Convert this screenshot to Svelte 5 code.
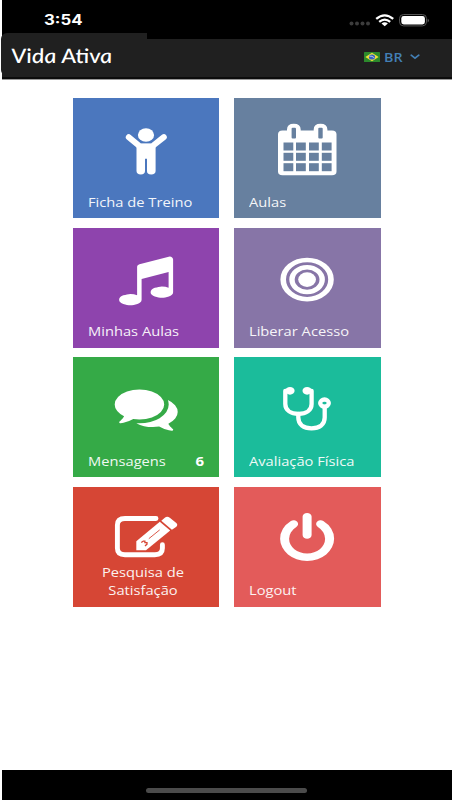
<script>
  const tiles = [
    { icon: 'child', label: 'Ficha de Treino', color: '#4b77be' },
    { icon: 'calendar', label: 'Aulas', color: '#67809f' },
    { icon: 'music', label: 'Minhas Aulas', color: '#8e44ad' },
    { icon: 'target', label: 'Liberar Acesso', color: '#8775a7' },
    { icon: 'comments', label: 'Mensagens', color: '#35aa47', count: 6 },
    { icon: 'stethoscope', label: 'Avaliação Física', color: '#1bbc9b' },
    { icon: 'survey', label: 'Pesquisa de Satisfação', color: '#d64635', centered: true },
    { icon: 'power', label: 'Logout', color: '#e35b5a' }
  ];
  const cellColumns = [49.5, 62, 75, 87.8];
  const cellRows = [44.5, 54.8, 65.2];
</script>

<div class="screen">
  <header class="status">
    <span class="time">3:54</span>
    <svg class="signals" width="84" height="18" viewBox="0 0 84 18">
      <g fill="#3c3c3c">
        <circle cx="5.5" cy="9.6" r="2" /><circle cx="11" cy="9.6" r="2" />
        <circle cx="16.5" cy="9.6" r="2" /><circle cx="22" cy="9.6" r="2" />
      </g>
      <g fill="none" stroke="#fff" stroke-width="2.3">
        <path d="M30.2 4.9Q38.7-2.2 47.2 4.9" />
        <path d="M33.2 7.9Q38.7 3.4 44.2 7.9" />
      </g>
      <path d="M35.5 9.4Q38.7 7 41.9 9.4L38.7 12.2Z" fill="#fff" />
      <rect x="53.5" y="0.5" width="27" height="11.4" rx="4" fill="none" stroke="#555" />
      <rect x="55.3" y="2" width="23.6" height="8.4" rx="2.4" fill="#fff" />
      <path d="M81.7 4.4Q84 6.4 81.7 8.4Z" fill="#666" />
    </svg>
  </header>

  <nav class="bar">
    <div class="brand"><span>Vida Ativa</span></div>
    <div class="lang">
      <svg width="16" height="10" viewBox="0 0 16 10">
        <rect width="16" height="10" rx="0.6" fill="#2c8a2c" />
        <path d="M8 .8 14.6 5 8 9.2 1.4 5Z" fill="#f0e03a" />
        <ellipse cx="8" cy="5" rx="3.1" ry="2.6" fill="#3560bd" />
        <path d="M5.3 4.2Q8 3.6 10.5 5.9" stroke="#cfdcf5" stroke-width=".8" fill="none" />
      </svg>
      <span class="code">BR</span>
      <svg class="caret" width="10" height="6" viewBox="0 0 10 6">
        <path d="M1.2 1.2 5 4.2 8.8 1.2" fill="none" stroke="#437fb5" stroke-width="1.7" stroke-linecap="round" />
      </svg>
    </div>
  </nav>

  <main>
    {#each tiles as tile}
      <section class="tile" style:background={tile.color}>
        <svg class="icon" viewBox="0 0 146 80">
          {#if tile.icon === 'child'}
            <ellipse cx="73" cy="37" rx="8.1" ry="6.8" />
            <path d="M55.8 39.2 67 48.5H79L90.8 39.2" fill="none" stroke="#fff" stroke-width="6" stroke-linecap="round" stroke-linejoin="round" />
            <path d="M63.5 47.5 68 45.8H78L82.6 47.5V73Q82.6 76.4 78.2 76.4T74 73V60.7H72V73Q72 76.4 67.8 76.4T63.5 73Z" />
          {:else if tile.icon === 'calendar'}
            <path d="M48.5 32.5H53V31.5Q53 25.8 59.8 25.8T66.7 31.5V32.5H79.7V31.5Q79.7 25.8 86.5 25.8T93.4 31.5V32.5H98Q102.5 32.5 102.5 36.3V73.5Q102.5 77.3 98 77.3H48.5Q44 77.3 44 73.5V36.3Q44 32.5 48.5 32.5Z" />
            <g fill={tile.color}>
              <rect x="57.6" y="29.8" width="4.4" height="10.8" rx="1" />
              <rect x="84.3" y="29.8" width="4.4" height="10.8" rx="1" />
              {#each cellRows as y}
                {#each cellColumns as x}
                  <rect {x} {y} width="9.8" height="8" />
                {/each}
              {/each}
            </g>
          {:else if tile.icon === 'music'}
            <path transform="translate(41.6 24.85) scale(.03516 .0293)" d="M1664 224v1120q0 50-34 89t-86 60.500-103.500 32-96.500 10.500-96.500-10.500-103.500-32-86-60.500-34-89 34-89 86-60.500 103.500-32 96.500-10.500q105 0 192 39v-537l-768 237v709q0 50-34 89t-86 60.500-103.500 32-96.500 10.500-96.500-10.500-103.500-32-86-60.500-34-89 34-89 86-60.500 103.500-32 96.500-10.500q105 0 192 39v-967q0-31 19-56.500t49-35.500l832-256q12-4 28-4 40 0 68 28t28 68z" />
          {:else if tile.icon === 'target'}
            <g transform="translate(73.1 51.6) scale(1 .82)">
              <circle r="23.9" fill="none" stroke="#fff" stroke-width="5.6" />
              <circle r="15.1" fill="none" stroke="#fff" stroke-width="5.4" />
              <circle r="8.9" />
            </g>
          {:else if tile.icon === 'comments'}
            <path transform="translate(41.7 25) scale(.03516 .02933)" d="M1408 768q0 139-94 257t-256.500 186.500-353.500 68.500q-86 0-176-16-124 88-278 128-36 9-86 16h-3q-11 0-20.500-8t-11.500-21q-1-3-1-6.500t.5-6.500 2-6l2.500-5 3.500-5.500 4-5 4.500-5 4-4.500q5-6 23-25t26-29.500 22.500-29 25-38.500 20.500-44q-124-72-195-177t-71-224q0-139 94-257t256.500-186.500 353.500-68.500 353.500 68.500 256.500 186.500 94 257zm384 256q0 120-71 224.500t-195 176.500q10 24 20.500 44t25 38.500 22.500 29 26 29.500 23 25q1 1 4 4.500t4.500 5 4 5 3.500 5.500l2.500 5 2 6 .5 6.500-1 6.500q-3 14-13 22t-22 7q-50-7-86-16-154-40-278-128-90 16-176 16-271 0-472-132 58 4 88 4 161 0 309-45t264-129q125-92 192-212t67-254q0-77-23-152 129 71 204 178t75 230z" />
          {:else if tile.icon === 'stethoscope'}
            <g fill="none" stroke="#fff" stroke-width="4.3" stroke-linecap="round" stroke-linejoin="round">
              <path d="M55.5 33.8H51.3V47C51.3 53.5 57 56.8 64.5 56.8S77.6 53.5 77.6 47V33.8H73.5" />
              <path d="M64.3 57V60.5C64.3 67.5 69.5 71.3 77.5 71.3S90.7 67.5 90.7 60.5V50" />
              <ellipse cx="90.5" cy="46.1" rx="4.3" ry="3.6" />
            </g>
            <ellipse cx="56" cy="33.8" rx="4.6" ry="3.9" />
            <ellipse cx="73.1" cy="33.8" rx="4.6" ry="3.9" />
          {:else if tile.icon === 'survey'}
            <path d="M83 31.5H52Q44.4 31.5 44.4 38V61.3Q44.4 67.7 52 67.7H81.8Q89.4 67.7 89.4 61.3V57.8" fill="none" stroke="#fff" stroke-width="4.9" stroke-linecap="round" />
            <path d="M63.3 54.2 86.8 34.8 97.2 43.6 73 63.3H63.3Z" />
            <path d="M88.3 33.7 91.8 30.8Q94.2 28.8 96.8 30.8L103 35.7Q105.5 37.8 103 39.9L98.9 42.7Z" />
            <path d="M75.8 51.7 86.7 42.9" stroke={tile.color} stroke-width=".9" />
            <path d="M68.3 55.6 70.3 54.1H71.9V55.6H74V57.1L72 58.9" fill="none" stroke={tile.color} stroke-width="1.3" />
          {:else}
            <path transform="translate(41.6 25.9) scale(.03516 .02885)" d="M1664 896q0 156-61 298t-164 245-245 164-298 61-298-61-245-164-164-245-61-298q0-182 80.500-343t226.500-270q43-32 95.500-25t83.500 50q32 42 24.500 94.500t-49.500 84.500q-98 74-151.500 181t-53.500 228q0 104 40.500 198.500t109.500 163.500 163.500 109.500 198.500 40.500 198.500-40.500 163.500-109.500 109.500-163.500 40.500-198.500q0-121-53.500-228t-151.500-181q-42-32-49.500-84.500t24.500-94.500q31-43 84-50t95 25q146 109 226.500 270t80.500 343zm-640-768v640q0 52-38 90t-90 38-90-38-38-90v-640q0-52 38-90t90-38 90 38 38 90z" />
          {/if}
        </svg>
        <div class="caption" class:centered={tile.centered}>
          <span class="label">{tile.label}</span>
          {#if tile.count}<span class="count">{tile.count}</span>{/if}
        </div>
      </section>
    {/each}
  </main>

  <footer><div class="home"></div></footer>
</div>

<style>
  :global(body) { background: #fff; }
  .screen {
    width: 452px;
    height: 800px;
    display: flex;
    flex-direction: column;
    background: #fff;
    font-family: "Open Sans", sans-serif;
    overflow: hidden;
  }
  .status {
    height: 39px;
    flex: none;
    box-sizing: border-box;
    margin-left: 2px;
    padding: 0 22.5px 0 42px;
    display: flex;
    justify-content: space-between;
    background: #000;
  }
  .time {
    margin-top: 11px;
    font: 700 14px/18px Inter, sans-serif;
    color: #fff;
    transform: scaleX(1.2);
    transform-origin: left;
  }
  .signals { margin-top: 14px; }
  .bar {
    height: 40px;
    flex: none;
    box-sizing: border-box;
    margin: 0 0 1px 2px;
    display: flex;
    justify-content: space-between;
    background: #202020;
    border-bottom: 2px solid #0c0c0c;
    box-shadow: 0 1px #999;
  }
  .brand {
    width: 146px;
    height: 43px;
    margin: -6px 0 0 -1px;
    border-radius: 6px 0 0 6px;
    background: #202020;
    box-sizing: border-box;
    padding: 10px 0 0 10px;
    color: #fff;
    font: italic 500 20px/24px Lato, sans-serif;
  }
  .brand span {
    display: inline-block;
    white-space: nowrap;
    transform: scaleX(1.18) skewX(6deg);
    transform-origin: left;
  }
  .lang {
    display: flex;
    align-items: center;
    height: 36px;
    padding-right: 32px;
    color: #437fb5;
  }
  .code {
    width: 17px;
    margin: -1px 9.5px 0 4px;
    font-size: 13px;
    font-weight: 600;
    line-height: 16px;
    transform: scaleX(1.1);
    transform-origin: left;
  }
  main {
    flex: 1;
    display: grid;
    grid-template-columns: 146.5px 146.5px;
    grid-auto-rows: 120px;
    gap: 9.5px 15px;
    align-content: start;
    padding: 18.3px 0 0 72.9px;
  }
  .tile {
    display: flex;
    flex-direction: column;
    color: #fff;
  }
  .icon {
    width: 146px;
    height: 80px;
    flex: none;
    display: block;
    fill: #fff;
  }
  .caption {
    flex: 1;
    display: flex;
    justify-content: space-between;
    align-items: flex-end;
    padding: 0 15px 6.8px 14.7px;
    font-size: 12.5px;
    line-height: 18px;
  }
  .label {
    white-space: nowrap;
    font-weight: 500;
    opacity: .93;
    transform: scaleX(1.175);
    transform-origin: left;
  }
  .count {
    font-weight: 700;
    transform: scaleX(1.2);
    transform-origin: right;
  }
  .centered {
    justify-content: center;
    align-items: flex-start;
    padding-top: 0;
    padding-bottom: 0;
  }
  .centered .label {
    width: 80px;
    margin: -3.2px 0 0 -6px;
    white-space: normal;
    text-align: center;
    transform-origin: center;
  }
  footer {
    height: 30px;
    flex: none;
    margin-left: 2px;
    display: flex;
    justify-content: center;
    align-items: center;
    padding: 11px 1px 0 0;
    box-sizing: border-box;
    background: #000;
  }
  .home {
    width: 161px;
    height: 5px;
    border-radius: 3px;
    background: #4b4b4b;
  }
</style>
